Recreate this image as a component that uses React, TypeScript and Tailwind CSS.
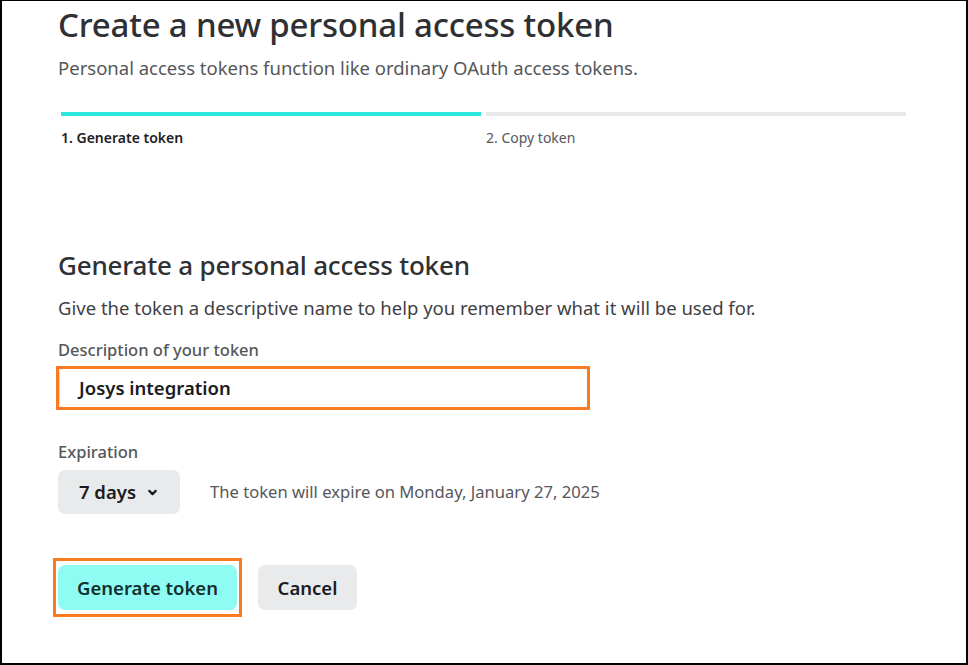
import { ChevronDown } from "lucide-react";

export default function App() {
  return (
    <div
      className="w-[968px] h-[665px] bg-white border-t border-l-2 border-r-2 border-b-2 border-black overflow-hidden text-[#2f3033]"
      style={{ fontFamily: '"Noto Sans", "Open Sans", sans-serif' }}
    >
      <div className="pl-[56px] pr-[60px]">
        <h1 className="text-[33px] leading-[44px] font-medium tracking-[-0.2px] mt-[2px]">
          Create a new personal access token
        </h1>
        <p className="text-[18.5px] leading-[24px] text-[#55575b] mt-[9px]">
          Personal access tokens function like ordinary OAuth access tokens.
        </p>

        <div className="mt-[32px] pl-[3px] grid grid-cols-2 gap-[5px]">
          <div>
            <div className="h-[4px] bg-[#2ee6e0]" />
            <div className="mt-[12px] text-[14px] leading-[20px] font-semibold text-[#1f2023]">1. Generate token</div>
          </div>
          <div>
            <div className="h-[4px] bg-[#e8e9eb]" />
            <div className="mt-[12px] text-[14px] leading-[20px] text-[#55575b]">2. Copy token</div>
          </div>
        </div>

        <h2 className="mt-[100px] text-[26px] leading-[34px] font-medium tracking-[-0.2px]">
          Generate a personal access token
        </h2>
        <p className="mt-[14px] text-[18.5px] leading-[24px] text-[#3f4145]">
          Give the token a descriptive name to help you remember what it will be used for.
        </p>

        <label className="block mt-[19px] text-[16.5px] leading-[22px] font-medium text-[#55575b]">
          Description of your token
        </label>
        <div className="mt-[5px] w-[534px] h-[44px] border-[3px] border-[#f97a1f] -ml-[2px]">
          <div className="h-full rounded-l-[4px] border-l border-[#d5d7da] flex items-center pl-[19px] text-[18.5px] font-semibold text-[#1a1b1e]">
            Josys integration
          </div>
        </div>

        <label className="block mt-[31px] text-[16.5px] leading-[22px] font-medium text-[#55575b]">
          Expiration
        </label>
        <div className="mt-[7px] flex items-center gap-[30px]">
          <button className="w-[122px] h-[44px] rounded-[7px] bg-[#e9eaec] flex items-center justify-center gap-[10px] text-[18.5px] font-semibold text-[#1a1b1e]">
            7 days
            <ChevronDown className="w-[13px] h-[13px]" strokeWidth={4} />
          </button>
          <span className="text-[16.6px] text-[#55575b]">The token will expire on Monday, January 27, 2025</span>
        </div>

        <div className="mt-[44px] flex items-center gap-[16px] -ml-[5px]">
          <div className="border-[3px] border-[#f97a1f] px-[2px] py-[4px]">
            <button className="w-[179px] h-[45px] rounded-[7px] bg-[#8ffcf4] text-[18.5px] font-semibold text-[#12302e]">
              Generate token
            </button>
          </div>
          <button className="w-[99px] h-[45px] rounded-[7px] bg-[#e9eaec] text-[18.5px] font-semibold text-[#1a1b1e]">
            Cancel
          </button>
        </div>
      </div>
    </div>
  );
}
